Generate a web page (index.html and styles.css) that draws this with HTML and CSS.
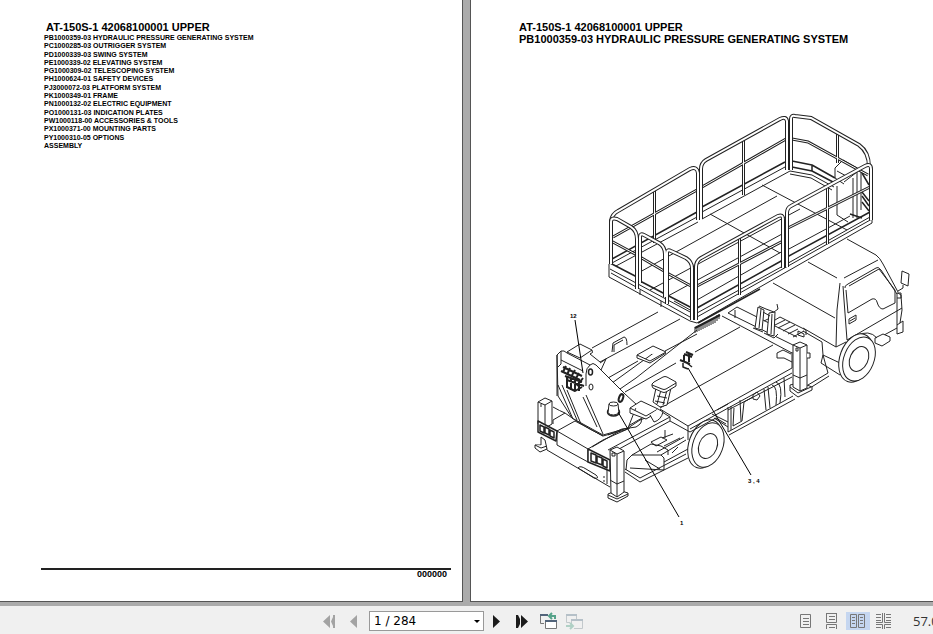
FILE: index.html
```html
<!DOCTYPE html>
<html lang="en">
<head>
    <meta charset="UTF-8">
    <meta name="viewport" content="width=device-width, initial-scale=1.0">
    <title>AT-150S-1 42068100001 UPPER</title>
    <link rel="stylesheet" href="styles.css">
</head>
<body>
    <main class="viewer">
        <!-- Contents page -->
        <section class="page contents">
            <h1 class="title">AT-150S-1 42068100001 UPPER</h1>
            <ul class="sections">
                <li>PB1000359-03 HYDRAULIC PRESSURE GENERATING SYSTEM</li>
                <li>PC1000285-03 OUTRIGGER SYSTEM</li>
                <li>PD1000339-03 SWING SYSTEM</li>
                <li>PE1000339-02 ELEVATING SYSTEM</li>
                <li>PG1000309-02 TELESCOPING SYSTEM</li>
                <li>PH1000624-01 SAFETY DEVICES</li>
                <li>PJ3000072-03 PLATFORM SYSTEM</li>
                <li>PK1000349-01 FRAME</li>
                <li>PN1000132-02 ELECTRIC EQUIPMENT</li>
                <li>PO1000131-03 INDICATION PLATES</li>
                <li>PW1000118-00 ACCESSORIES &amp; TOOLS</li>
                <li>PX1000371-00 MOUNTING PARTS</li>
                <li>PY1000310-05 OPTIONS</li>
                <li>ASSEMBLY</li>
            </ul>
            <footer class="page-footer">000000</footer>
        </section>

        <!-- Hydraulic pressure generating system -->
        <section class="page figure-page">
            <h2 class="title">AT-150S-1 42068100001 UPPER</h2>
            <h2 class="title">PB1000359-03 HYDRAULIC PRESSURE GENERATING SYSTEM</h2>
            <svg class="drawing" viewBox="530 105 390 430" role="img" aria-label="Truck with lift platform">
                <defs>
                    <g id="back-rails">
                        <path d="M611 264V221Q612 214 618 211L690 169Q697 166 698 173V220"/>
                        <path d="M701 219V169Q701 163 706 160L780 119Q786 116 787 121V170"/>
                        <path d="M791 170V119Q791 115 795 116L811 118L859 145Q869 152 869 167"/>
                    </g>
                    <g id="back-bars">
                        <path d="M613 237L697 190M654.5 190V243"/>
                        <path d="M702 187L786 139M743.5 139V195"/>
                        <path d="M792 139L808 142L868 175M837.5 133V163"/>
                    </g>
                    <g id="front-rails">
                        <path d="M611 264V222Q611 217 617 219L631 227Q637 231 637 239V289"/>
                        <path d="M640 283V237Q640 233 644 235L659 243Q665 247 665 254V297"/>
                        <path d="M667 304V253Q667 249 671 251L686 258Q692 262 692 268V320"/>
                        <path d="M696 320V267Q696 261 701 258L778 216Q783 214 783 219V268"/>
                        <path d="M787 267V213Q787 208 791 206L865 166Q871 163 871 169V220"/>
                    </g>
                    <g id="front-bars">
                        <path d="M611 241L637 255M640 257L664 271M667 273L691 286"/>
                        <path d="M697 286L783 241M739.5 238V295"/>
                        <path d="M788 228L870 187M827.5 187V244"/>
                    </g>
                </defs>

                <!-- boom and bed -->
                <g class="line">
                    <path d="M592 348L658 312M600 362L680 319M608 378L638 361M665 351L697 334M612 383L655 352M620 389L636 378L697 330"/>
                    <path d="M625 392L676 363M695 352L740 327M660 408L773 345M722 316L792 353M737 307L797 337M728 313L797 347M735 310V318M728 313L737 307"/>
                    <path d="M660 409L688 426L792 368M690 429L792 373M688 426V440M792 352V368M777 353L783 350L791 354M777 353V358H784L792 362"/>
                    <path d="M717 410L728 404M728 407V432M731 406V430M728 432L793 396M729 435L795 399M728 410L792 377"/>
                    <path d="M734 408L733 426L742 421L744 402M740 400L741 421M753 397L744 402M764 389L766 410M768 387L770 408M772 385Q778 386 776 405M776 382Q783 384 780 403M784 378L785 397"/>
                    <path d="M712 414L728 422M714 418L728 427"/>
                    <path d="M753 395L757 392L760 396L757 400L753 399Z"/>
                    <path d="M808 385L828 373L823 355M810 388L829 376M803 331L822 342L823 355L821 363L840 375M823 355L840 363"/>
                    <path d="M775 325L785 320M778 328L790 322M783 331L795 325M788 334L798 329M793 337L804 331M770 323L780 317L806 330V335M798 331l6 3v3l-6-2z"/>
                </g>
                <path class="line bold" d="M695 328L720 315"/>
                <path class="line" d="M695 333v-6M697 332v-6M699 331v-6M701 330v-6M703 329v-6M705 328v-6M707 327v-6M709 326v-6M711 325v-6M713 324v-6M715 323v-6M717 321v-6M719 319v-5"/>

                <!-- jack stand -->
                <g class="line solid">
                    <path d="M758 307L755 328L762 330L764 310ZM761 309L759 328M753 328L763 332"/>
                    <path d="M769 313L767 334L774 336L775 312ZM772 314L771 334M764 333L774 338L778 334"/>
                    <path d="M759 306L766 309L774 312L778 309L777 304M763 312L770 316M764 321L768 319"/>
                </g>

                <!-- cab -->
                <g class="line">
                    <path d="M808 262L837 278M773 283L835 318M847 239L876 255Q880 258 883 264L898 292M844 278L878 260"/>
                    <path d="M840 283L837 310L836 347M803 328L836 347L846 342M843 286L844 300L847 340"/>
                    <path d="M845 288Q844 286 848 284L876 268Q878 266 881 270L897 294"/>
                    <path d="M846 290L848 313L872 299Q876 298 877 302Q879 309 883 309L895 303V290L879 269L849 286"/>
                    <path d="M847 340L902 308M875 340L897 328M898 293L901 295L902 310L900 323M849 319L856 315V320L849 324ZM850 321L855 318"/>
                    <path d="M902 271L909 274L908 286L901 283ZM903 285V288L898 291M897 293h4v5h-4z"/>
                    <path d="M897 325L903 321V332L897 334ZM897 298V325"/>
                    <path class="solid" d="M875 338V343L882 346L890 341V337L883 334Z"/>
                    <path d="M840 363Q841 345 856 336Q869 329 877 338"/>
                    <ellipse class="solid" cx="856" cy="358" rx="16" ry="25" transform="rotate(20 856 358)"/>
                    <ellipse class="solid" cx="859" cy="359" rx="15" ry="23" transform="rotate(22 859 359)"/>
                    <ellipse cx="859" cy="359" rx="9" ry="13" transform="rotate(25 859 359)"/>
                </g>

                <!-- right outrigger -->
                <g class="line solid">
                    <path d="M790 385V391L798 397L812 390V387L807 385L798 383Z"/>
                    <path d="M790 387L798 393L811 387"/>
                    <path d="M793 345L800 342L807 345V388L800 391L793 387Z"/>
                    <path d="M793 345L800 348L807 345M800 348V391M793 375L800 378L807 375M796 348h2v3h-2zM807 353h3v5h-3"/>
                </g>

                <!-- rear frame -->
                <g class="line">
                    <path d="M553 420L565 413L575 420M557 431L575 421L603 436M553 420V424M592 447L642 418M608 450L670 417M610 454L670 421V417L662 412"/>
                    <path d="M575 420L590 429L603 436L625 430L640 420L648 417"/>
                    <path d="M557 431L588 449V462L557 445ZM588 449L603 440L630 428M589 449V462"/>
                    <path d="M545 444L547 450L610 487M578 468Q580 465 586 469L596 475Q600 479 594 478ZM607 470V484M604 476v2M604 480v2M670 421L690 432"/>
                    <path d="M625 472L640 482L688 458M625 469L640 478L686 454M627 460L632 455H661L664 458V470L630 468M627 460L626 470M661 455L686 440M664 462L688 449M632 455L651 444L661 446L668 450V455"/>
                    <path d="M651 442L661 437L667 440L656 446ZM662 438L673 434M664 446L680 438M657 452L684 437M665 430V438M672 453L678 447M645 460L660 469"/>
                </g>

                <!-- rear wheel -->
                <g class="line solid">
                    <ellipse cx="705" cy="444" rx="16" ry="25" transform="rotate(20 705 444)"/>
                    <ellipse cx="708" cy="445" rx="15" ry="23" transform="rotate(20 708 445)"/>
                    <ellipse cx="708" cy="446" rx="9" ry="13" transform="rotate(22 708 446)"/>
                    <path class="open" d="M690 432L716 418L726 424"/>
                </g>

                <!-- rear outriggers and lamps -->
                <g class="line solid">
                    <path d="M538 402L545 398L552 401V424L545 428L538 424ZM538 402L545 405L552 401M545 405V425M541 404v3"/>
                    <path d="M541 437V445L535 445V448L540 452L547 449L545 440Z"/>
                    <path d="M535 445L541 448L547 446"/>
                    <path class="mid" d="M538 421L557 431L556 441L538 432Z"/>
                    <path class="mid" d="M540 425L544 427V433L540 431ZM545 427L549 429V435L545 433ZM550 430L554 432V438L550 436Z"/>
                    <path class="mid" d="M588 449L610 460V471L588 462Z"/>
                    <path class="mid" d="M591 453L596 455V463L591 461ZM597 456L602 458V465L597 463ZM603 459L607 461V468L603 466Z"/>
                    <path d="M608 494V498L617 502L628 496V493L618 490Z"/>
                    <path d="M608 495L617 499L628 494"/>
                    <path d="M610 450L617 447L624 451V492L617 497L611 493Z"/>
                    <path d="M610 450L617 454L624 451M617 454V497M610 480L617 484L624 481M612 453h3v3h-3z"/>
                </g>

                <!-- turret -->
                <g class="line">
                    <path class="solid" d="M567 352L580 344L592 350L580 358Z"/>
                    <path class="solid" d="M557 355L561 351Q564 350 567 353L590 365Q593 362 596 365L625 394L637 405L628 428L603 435L572 418L558 396Z"/>
                    <path d="M561 351V364L558 367M561 360L583 371M558 385L573 419M562 385L577 420M567 390L581 424M586 395L603 434M583 397L597 427M590 365Q586 368 586 374V386"/>
                    <path d="M592 350Q594 353 590 354L600 362M600 363L606 359L601 370M557 355V396M553 407Q560 411 565 413M612 352L613 343L624 337Q627 337 627 345M614 352V345L623 340"/>
                    <ellipse class="mid" cx="590.5" cy="372" rx="2" ry="3"/>
                    <ellipse cx="591" cy="387" rx="2" ry="3"/>
                    <ellipse class="bold" cx="621" cy="398" rx="2" ry="4" transform="rotate(20 621 398)"/>
                    <path d="M608 435L622 429L636 427Q643 423 641 419"/>
                </g>

                <!-- valve block -->
                <g class="line bold">
                    <path d="M563 367L582 376M561 371L580 380M566 366L563 372M570 368L567 375M575 370L571 377M579 373L575 380"/>
                    <path d="M565 376L582 382M567 380L584 386M567 376V388M571 378V390M575 380V391M579 381V391M583 378L577 386"/>
                    <path d="M567 387L575 391L582 387"/>
                </g>

                <!-- pads and operator seat -->
                <g class="line solid">
                    <path d="M637 355L653 346L666 352L650 361ZM637 355V358L650 363L666 353"/>
                    <path d="M656 388L653 402L660 407L667 405L671 388Z"/>
                    <path d="M661 390L657 404M667 390L663 405M657 396L667 398M655 401L665 403"/>
                    <path d="M630 408L641 401L658 409L646 416ZM630 408V413L646 419L658 412V409"/>
                    <path d="M650 415L654 422Q661 420 663 412L658 409"/>
                    <path d="M652 386Q651 384 654 382L663 377Q665 376 667 377L676 382V386L666 392Q664 393 662 392L653 388Z"/>
                    <path d="M652 385L662 389Q664 390 666 389L676 383"/>
                </g>

                <!-- pump cover -->
                <g class="line solid">
                    <ellipse class="mid" cx="613.5" cy="412" rx="6" ry="4"/>
                    <path d="M609 404L608 413Q613 417 619 413L618 404"/>
                    <ellipse cx="613.5" cy="404" rx="4.5" ry="2"/>
                </g>

                <!-- coupling -->
                <g class="line bold">
                    <path d="M680 360L690 364M684 354L692 357M686 352L693 355M684 355V361M689 353V362"/>
                    <path class="mid" d="M683 363V367L688 369M687 363L692 367"/>
                </g>

                <!-- platform -->
                <path class="floor" d="M609 264L790 170L812 174L872 214V223L693 323L609 278Z"/>
                <g class="line">
                    <path d="M612 263L697 217M616 266L698 222M702 212L785 167M702 219L790 171L812 175L834 187"/>
                    <path d="M790 174L811 178L832 190M762 185L847 230M710 214L780 253"/>
                    <path d="M640 272L777 196M650 290L800 209M668 296L782 234M697 300L783 251M787 250L828 228L850 216"/>
                    <path d="M835 178V168L843 160L857 168V218M835 178L844 184M861 170V210M837 186V215L848 222M844 182L857 172M853 178V218M837 171L848 177"/>
                </g>
                <g class="line mid">
                    <path d="M612 259L697 212M702 207L785 162M792 161L812 165L835 178M792 167L812 171L833 182M812 165V171"/>
                    <path d="M862 173L869 185M862 192L869 201M862 196L869 206M862 202L869 211M850 214L862 218"/>
                </g>
                <use href="#back-bars" class="bar"/>
                <use href="#back-bars" class="bar-core"/>
                <use href="#back-rails" class="tube"/>
                <use href="#back-rails" class="tube-core"/>
                <g class="line">
                    <path d="M609 264V277L690 321L697 323L872 223V214M610 269L692 313M611 273L690 317M697 313L783 266L870 217M697 317L872 219"/>
                    <path d="M640 290V295M661 301V307M674 301L692 311"/>
                </g>
                <g class="line mid">
                    <path d="M610 263L637 277M640 281L692 308M697 308L783 260M787 257L870 212"/>
                    <path d="M698 323L760 289"/>
                </g>
                <use href="#front-bars" class="bar"/>
                <use href="#front-bars" class="bar-core"/>
                <use href="#front-rails" class="tube"/>
                <use href="#front-rails" class="tube-core"/>

                <!-- callouts -->
                <path class="line leader" d="M575 320L583 373M688 368L751 475M618 412L679 517"/>
                <text class="callout" x="570" y="318">12</text>
                <text class="callout" x="748" y="483">3 , 4</text>
                <text class="callout" x="680" y="525">1</text>
            </svg>
        </section>
    </main>

    <nav class="toolbar" aria-label="Page controls">
        <div class="pager">
            <button class="btn" type="button" aria-label="First page" disabled>
                <svg width="20" height="18" viewBox="0 0 20 18"><path fill="#a3a3a3" d="M11 3V16L4 9.5ZM12 9.5L14 5V14ZM14 3h2v13h-2z"/></svg>
            </button>
            <button class="btn" type="button" aria-label="Previous page" disabled>
                <svg width="20" height="18" viewBox="0 0 20 18"><path fill="#a3a3a3" d="M13 3V16L6 9.5Z"/></svg>
            </button>
            <label class="page-picker">
                <select aria-label="Page">
                    <option>1 / 284</option>
                </select>
            </label>
            <button class="btn" type="button" aria-label="Next page">
                <svg width="20" height="18" viewBox="0 0 20 18"><path fill="#1b1b1b" d="M4 3V16L11 9.5Z"/></svg>
            </button>
            <button class="btn" type="button" aria-label="Last page">
                <svg width="20" height="18" viewBox="0 0 20 18"><path fill="#1b1b1b" d="M2 3h2l2 4v5l-2 4H2zM7 3V16L14 9.5Z"/></svg>
            </button>
            <button class="btn" type="button" aria-label="Previous view">
                <svg width="20" height="18" viewBox="0 0 20 18" fill="none"><path stroke="#777" d="M5 11.5H1.500V2.500H9"/><path stroke="#52647a" stroke-width="2" d="M1 3H9"/><path fill="#fff" stroke="#777" d="M6.500 8.500h11v8h-11z"/><path stroke="#52647a" stroke-width="2" d="M6 9H18"/><path stroke="#56a38a" stroke-width="2" d="M16 7V4H10M13 1L10 4L13 7"/></svg>
            </button>
            <button class="btn" type="button" aria-label="Next view" disabled>
                <svg width="20" height="18" viewBox="0 0 20 18" fill="none"><path stroke="#c3c9cc" d="M12.500 7V2.500H2.500V10.500H6M7.500 12V7.500H18.500V16.500H10"/><path stroke="#b5c0c8" stroke-width="2" d="M2 3H13M7 8H19"/><path stroke="#b0d0c5" stroke-width="2" d="M2 14H9M6 11L9 14L6 17"/></svg>
            </button>
        </div>
        <div class="layouts">
            <button class="btn view" type="button" aria-label="Single page">
                <svg width="16" height="18" viewBox="0 0 16 18"><path class="sheet" d="M2.500 2.500h10v13h-10zM5 6.500h6M5 9.500h6M5 12.500h6"/></svg>
            </button>
            <button class="btn view" type="button" aria-label="Continuous">
                <svg width="16" height="18" viewBox="0 0 16 18"><path class="sheet" d="M2.500 1V10.500H12.500V1M2.500 1.500h10M5 4.500h6M5 7.500h6M2.500 17V12.500H12.500V17M5 15.500h6"/></svg>
            </button>
            <button class="btn view active" type="button" aria-label="Facing">
                <svg width="16" height="18" viewBox="0 0 16 18"><path class="sheet" d="M.5 2.500h6v13h-6zM8.500 2.500h6v13h-6zM2 5.500h3M2 8.500h3M2 11.500h3M10 5.500h3M10 8.500h3M10 11.500h3"/></svg>
            </button>
            <button class="btn view" type="button" aria-label="Continuous facing">
                <svg width="16" height="18" viewBox="0 0 16 18"><path class="sheet" d="M0 10.500H6.500V1M15 10.500H8.500V1M0 12.500H6.500V17M15 12.500H8.500V17M0 2.500h5M0 5.500h5M0 8.500h5M10 2.500h5M10 5.500h5M10 8.500h5M0 15.500h5M10 15.500h5"/></svg>
            </button>
            <span class="zoom">57.0</span>
        </div>
    </nav>
</body>
</html>
```

FILE: styles.css
```css
* {
    box-sizing: border-box;
}
body {
    margin: 0;
    height: 100vh;
    display: flex;
    flex-direction: column;
    font-family: "Liberation Sans", Arial, sans-serif;
    color: #000;
    background: #f0f0f0;
    overflow: hidden;
}
.viewer {
    flex: 1;
    min-height: 0;
    display: grid;
    grid-template-columns: 1fr 1fr;
    gap: 7px;
    padding-bottom: 4px;
    background: #ababab;
}
.page {
    min-width: 0;
    background: #fff;
    border-bottom: 1px solid #555;
    overflow: hidden;
}
.contents {
    display: flex;
    flex-direction: column;
    padding: 21px 11px 22px 41px;
    border-right: 1px solid #555;
}
.figure-page {
    padding: 21px 0 0 48px;
    border-left: 1px solid #555;
}
.title {
    margin: 0;
    font-size: 11px;
    line-height: 12px;
    font-weight: bold;
    white-space: nowrap;
}
.contents .title {
    padding-left: 5px;
}
.sections {
    list-style: none;
    margin: 0;
    padding: 1px 0 0 3px;
    height: 117px;
    display: grid;
    align-content: space-between;
    font-size: 7px;
    line-height: 8px;
    font-weight: bold;
}
.page-footer {
    margin-top: auto;
    padding-right: 4px;
    border-top: 2px solid #222;
    font-size: 9px;
    line-height: 9px;
    font-weight: bold;
    text-align: right;
}

/* Drawing */
.drawing {
    display: block;
    width: 390px;
    max-width: 100%;
    margin: 60px 0 0 11px;
}
.line {
    fill: none;
    stroke: #222;
    stroke-width: 1;
    stroke-linejoin: round;
}
.solid {
    fill: #fff;
}
.open {
    fill: none;
}
.mid {
    stroke-width: 1.5;
}
.bold {
    stroke-width: 2;
}
.leader {
    stroke: #000;
}
.floor {
    fill: #fff;
}
.tube,
.bar {
    fill: none;
    stroke: #222;
    stroke-width: 4;
}
.bar {
    stroke-width: 3;
}
.tube-core,
.bar-core {
    fill: none;
    stroke: #fff;
    stroke-width: 2;
}
.bar-core {
    stroke-width: 1;
}
.callout {
    font-size: 6px;
    font-weight: bold;
}

/* Toolbar */
.toolbar {
    flex: none;
    height: 28px;
    display: flex;
    align-items: center;
    justify-content: flex-end;
    gap: 210px;
    padding-top: 2px;
    background: #f0f0f0;
}
.pager {
    display: flex;
    align-items: center;
    gap: 5px;
}
.layouts {
    display: flex;
    align-items: center;
    gap: 2px;
}
.btn {
    width: 20px;
    height: 18px;
    padding: 0;
    border: none;
    background: none;
    display: flex;
    align-items: center;
    justify-content: center;
    cursor: pointer;
}
.view {
    width: 24px;
}
.active {
    background: #c5d6f0;
}
.sheet {
    fill: none;
    stroke: #777;
}
.page-picker {
    position: relative;
}
.page-picker select {
    display: block;
    width: 115px;
    height: 20px;
    padding: 0 4px;
    border: 1px solid #999;
    border-radius: 0;
    background: #fff;
    color: #000;
    font-family: "DejaVu Sans", sans-serif;
    font-size: 12px;
    appearance: none;
}
.page-picker::after {
    content: "";
    position: absolute;
    right: 4px;
    top: 9px;
    border: 3px solid transparent;
    border-top-color: #000;
    pointer-events: none;
}
.zoom {
    width: 20px;
    margin-left: 15px;
    overflow: hidden;
    white-space: nowrap;
    font-family: "Open Sans", sans-serif;
    font-size: 13px;
    line-height: 18px;
    color: #333;
}
```
